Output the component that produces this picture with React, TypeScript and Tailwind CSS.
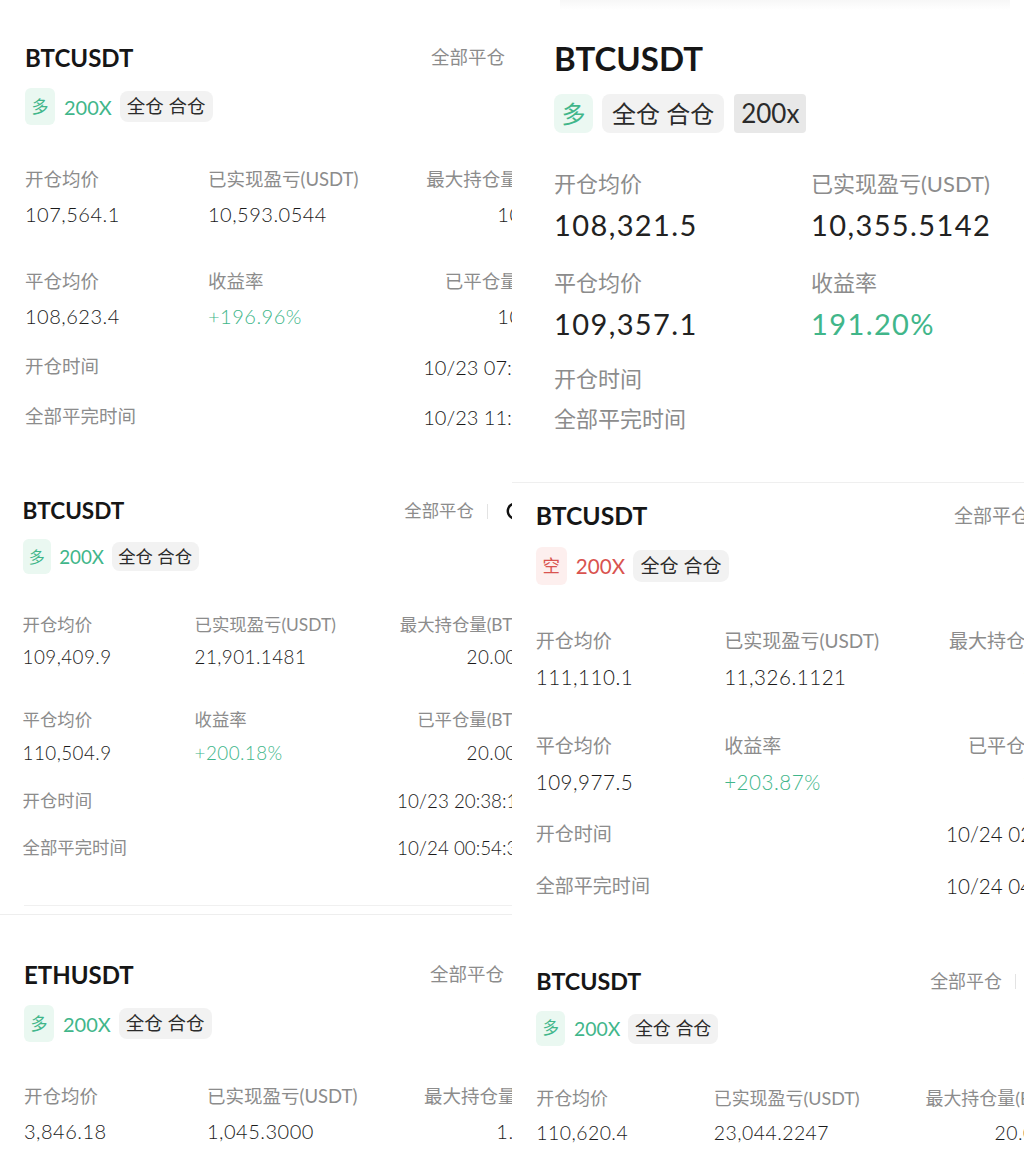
import React from 'react';

type Side = 'long' | 'short';

interface Position {
  symbol: string;
  side: Side;
  open: string;
  pnl: string;
  maxLabel: string;
  maxQty: string;
  close: string;
  roe: string;
  closedLabel: string;
  closedQty: string;
  openTime: string;
  closeTime: string;
}

const positions: Record<string, Position> = {
  a: {
    symbol: 'BTCUSDT',
    side: 'long',
    open: '107,564.1',
    pnl: '10,593.0544',
    maxLabel: '最大持仓量(BTC)',
    maxQty: '10.000',
    close: '108,623.4',
    roe: '+196.96%',
    closedLabel: '已平仓量(BTC)',
    closedQty: '10.000',
    openTime: '10/23 07:41:52',
    closeTime: '10/23 11:16:08',
  },
  b: {
    symbol: 'BTCUSDT',
    side: 'long',
    open: '109,409.9',
    pnl: '21,901.1481',
    maxLabel: '最大持仓量(BTC)',
    maxQty: '20.000',
    close: '110,504.9',
    roe: '+200.18%',
    closedLabel: '已平仓量(BTC)',
    closedQty: '20.000',
    openTime: '10/23 20:38:14',
    closeTime: '10/24 00:54:37',
  },
  c: {
    symbol: 'ETHUSDT',
    side: 'long',
    open: '3,846.18',
    pnl: '1,045.3000',
    maxLabel: '最大持仓量(ETH)',
    maxQty: '1.0000',
    close: '3,865.37',
    roe: '+199.56%',
    closedLabel: '已平仓量(ETH)',
    closedQty: '1.0000',
    openTime: '10/24 09:12:40',
    closeTime: '10/24 10:03:21',
  },
  e: {
    symbol: 'BTCUSDT',
    side: 'short',
    open: '111,110.1',
    pnl: '11,326.1121',
    maxLabel: '最大持仓量(BTC)',
    maxQty: '10.000',
    close: '109,977.5',
    roe: '+203.87%',
    closedLabel: '已平仓量(BTC)',
    closedQty: '10.000',
    openTime: '10/24 02:10:33',
    closeTime: '10/24 04:47:19',
  },
  f: {
    symbol: 'BTCUSDT',
    side: 'long',
    open: '110,620.4',
    pnl: '23,044.2247',
    maxLabel: '最大持仓量(BTC)',
    maxQty: '20.000',
    close: '111,772.6',
    roe: '+208.31%',
    closedLabel: '已平仓量(BTC)',
    closedQty: '20.000',
    openTime: '10/24 05:20:11',
    closeTime: '10/24 08:02:45',
  },
};

const ShareIcon = () => (
  <svg width="22" height="22" viewBox="0 0 22 22" fill="none" className="ml-[18px]">
    <path d="M16 4.5A8 8 0 1 0 19 11" stroke="#111" strokeWidth="2.6" strokeLinecap="round" />
    <path d="M12 2.5h5v5" stroke="#111" strokeWidth="2.4" strokeLinecap="round" strokeLinejoin="round" />
  </svg>
);

function Stat({ label, value, right, up }: { label: string; value: string; right?: boolean; up?: boolean }) {
  return (
    <div className={right ? 'flex flex-col items-end' : 'flex flex-col'}>
      <span className="h-[26px] whitespace-nowrap text-[18.5px] leading-[26px] text-[#8c8c8c]">{label}</span>
      <span
        className={
          up
            ? 'mt-[8px] whitespace-nowrap text-[20px] leading-[28px] font-light tracking-[0.5px] text-[#41b68a]'
            : 'mt-[8px] whitespace-nowrap text-[20px] leading-[28px] font-light tracking-[0.5px] text-[#1a1a1a]'
        }
      >
        {value}
      </span>
    </div>
  );
}

// one position card, drawn at base scale (the panels zoom it)
function Card({ p }: { p: Position }) {
  const long = p.side === 'long';
  return (
    <div className="w-[538px]">
      <div className="flex h-[32px] items-center justify-between">
        <span className="text-[24px] font-bold leading-[32px] text-[#161616]">{p.symbol}</span>
        <div className="flex items-center">
          <span className="text-[18.5px] text-[#8c8c8c]">全部平仓</span>
          <span className="ml-[14px] h-[16px] w-px bg-[#e3e3e3]" />
          <ShareIcon />
          <span className="w-[3px]" />
        </div>
      </div>

      <div className="mt-[14px] flex h-[37px] items-center">
        <span
          className={
            long
              ? 'flex h-[37px] w-[30px] items-center justify-center rounded-[6px] bg-[#eaf8f1] text-[17px] text-[#41b68a]'
              : 'flex h-[37px] w-[30px] items-center justify-center rounded-[6px] bg-[#fdefee] text-[17px] text-[#d9534f]'
          }
        >
          {long ? '多' : '空'}
        </span>
        <span className={long ? 'ml-[9px] text-[20px] text-[#41b68a]' : 'ml-[9px] text-[20px] text-[#d9534f]'}>200X</span>
        <span className="ml-[8px] flex h-[31px] items-center rounded-[8px] bg-[#f2f2f2] px-[7px] text-[18.5px] text-[#2b2b2b]">
          全仓 合仓
        </span>
      </div>

      <div className="mt-[41px] grid grid-cols-[183px_1fr_auto] gap-y-[40px]">
        <Stat label="开仓均价" value={p.open} />
        <Stat label="已实现盈亏(USDT)" value={p.pnl} />
        <Stat label={p.maxLabel} value={p.maxQty} right />
        <Stat label="平仓均价" value={p.close} />
        <Stat label="收益率" value={p.roe} up />
        <Stat label={p.closedLabel} value={p.closedQty} right />
      </div>

      <div className="mt-[24px] flex h-[26px] items-center justify-between">
        <span className="text-[18.5px] text-[#8c8c8c]">开仓时间</span>
        <span className="text-[20px] font-light text-[#1a1a1a]">{p.openTime}</span>
      </div>
      <div className="mt-[24px] flex h-[26px] items-center justify-between">
        <span className="text-[18.5px] text-[#8c8c8c]">全部平完时间</span>
        <span className="text-[20px] font-light text-[#1a1a1a]">{p.closeTime}</span>
      </div>
    </div>
  );
}

// the larger screenshot, top right
function BigCard() {
  return (
    <div className="h-[483px] shrink-0 overflow-hidden border-b border-[#efefef]">
      <div className="ml-[48px] mr-[14px] h-[10px] bg-linear-to-b from-[#f7f7f7] to-white" />
      <div className="pl-[42px]">
        <div className="mt-[28px] text-[33px] font-bold leading-[40px] text-[#161616]">BTCUSDT</div>
        <div className="mt-[16px] flex h-[39px] items-center">
          <span className="flex h-[39px] w-[39px] items-center justify-center rounded-[8px] bg-[#ebf8f2] text-[24px] text-[#41b68a]">
            多
          </span>
          <span className="ml-[9px] flex h-[39px] items-center rounded-[8px] bg-[#f2f2f2] px-[10px] text-[24px] text-[#2b2b2b]">
            全仓 合仓
          </span>
          <span className="ml-[10px] flex h-[39px] items-center rounded-[4px] bg-[#e8e8e8] px-[7px] text-[26px] text-[#2b2b2b]">
            200x
          </span>
        </div>

        <div className="mt-[36px] grid grid-cols-[257px_1fr] gap-y-[25px]">
          <div className="flex flex-col">
            <span className="text-[22px] leading-[30px] text-[#8c8c8c]">开仓均价</span>
            <span className="mt-[8px] text-[29px] leading-[36px] tracking-[1.4px] text-[#222]">108,321.5</span>
          </div>
          <div className="flex flex-col">
            <span className="text-[22px] leading-[30px] text-[#8c8c8c]">已实现盈亏(USDT)</span>
            <span className="mt-[8px] text-[29px] leading-[36px] tracking-[1.4px] text-[#222]">10,355.5142</span>
          </div>
          <div className="flex flex-col">
            <span className="text-[22px] leading-[30px] text-[#8c8c8c]">平仓均价</span>
            <span className="mt-[8px] text-[29px] leading-[36px] tracking-[1.4px] text-[#222]">109,357.1</span>
          </div>
          <div className="flex flex-col">
            <span className="text-[22px] leading-[30px] text-[#8c8c8c]">收益率</span>
            <span className="mt-[8px] text-[29px] leading-[36px] tracking-[1.4px] text-[#41b68a]">191.20%</span>
          </div>
        </div>

        <div className="mt-[22px] text-[22px] leading-[30px] text-[#8c8c8c]">开仓时间</div>
        <div className="mt-[10px] text-[22px] leading-[30px] text-[#8c8c8c]">全部平完时间</div>
      </div>
    </div>
  );
}

export default function App() {
  return (
    <div className="flex h-[1160px] w-[1024px] overflow-hidden bg-white font-[Lato,'Noto_Sans_CJK_SC',sans-serif]">
      {/* left column */}
      <div className="flex w-[512px] shrink-0 flex-col overflow-hidden">
        <div className="h-[468px] shrink-0 overflow-hidden pl-[25px] pt-[42px]">
          <Card p={positions.a} />
        </div>
        <div className="flex h-[447px] shrink-0 flex-col overflow-hidden border-b border-[#eeeeee] pt-[28px]">
          <div className="pl-[24px] [zoom:0.94]">
            <Card p={positions.b} />
          </div>
          <div className="mb-[8px] ml-[24px] mt-auto h-px bg-[#f0f0f0]" />
        </div>
        <div className="flex-1 overflow-hidden pl-[24px] pt-[44px]">
          <Card p={positions.c} />
        </div>
      </div>

      {/* right column */}
      <div className="flex w-[512px] shrink-0 flex-col overflow-hidden">
        <BigCard />
        <div className="h-[465px] shrink-0 overflow-hidden pt-[17px]">
          <div className="pl-[23px] [zoom:1.03]">
            <Card p={positions.e} />
          </div>
        </div>
        <div className="flex-1 overflow-hidden pt-[18px]">
          <div className="pl-[25px] [zoom:0.97]">
            <Card p={positions.f} />
          </div>
        </div>
      </div>
    </div>
  );
}
